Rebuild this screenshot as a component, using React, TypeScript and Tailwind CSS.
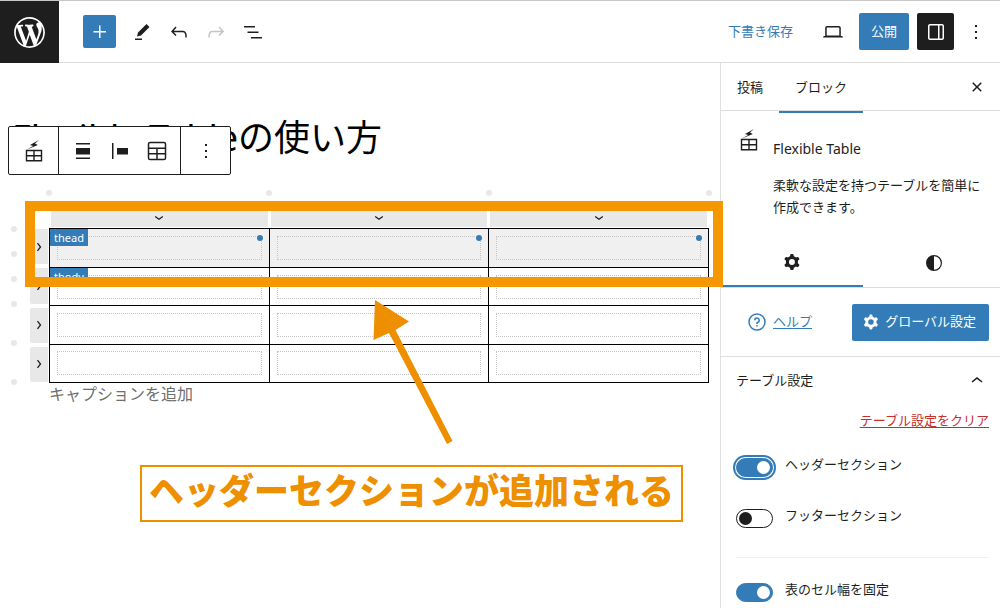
import React from "react";
import clsx from "clsx";

const icons = {
  wordpress:
    "M20 10c0-5.51-4.49-10-10-10C4.48 0 0 4.49 0 10c0 5.52 4.48 10 10 10 5.51 0 10-4.48 10-10zM7.78 15.37L4.37 6.22c.55-.02 1.17-.08 1.17-.08.5-.06.44-1.13-.06-1.11 0 0-1.45.11-2.37.11-.18 0-.37 0-.58-.01C4.12 2.69 6.87 1.11 10 1.11c2.33 0 4.45.87 6.05 2.34-.68-.11-1.65.39-1.65 1.58 0 .74.45 1.36.9 2.1.35.61.55 1.36.55 2.46 0 1.49-1.4 5-1.4 5l-3.03-8.37c.54-.02.82-.17.82-.17.5-.05.44-1.25-.06-1.22 0 0-1.44.12-2.38.12-.87 0-2.33-.12-2.33-.12-.5-.03-.56 1.2-.06 1.22l.92.08 1.26 3.41zM17.41 10c.24-.64.74-1.87.43-4.25.7 1.29 1.05 2.71 1.05 4.25 0 3.29-1.73 6.24-4.4 7.78.97-2.59 1.94-5.2 2.92-7.78zM6.1 18.09C3.12 16.65 1.11 13.53 1.11 10c0-1.3.23-2.48.72-3.59C3.25 10.3 4.67 14.2 6.1 18.09zm4.03-6.63l2.58 6.98c-.86.29-1.76.45-2.71.45-.79 0-1.57-.11-2.29-.33.81-2.38 1.62-4.74 2.42-7.1z",
  plus: "M11 12.5V18H12.5V12.5H18V11H12.5V5.5H11V11H5.5V12.5H11Z",
  pencil: "m19.5 7-3-3-8.5 8.5-1 4 4-1L19.5 7ZM12 18.5H5V20h7v-1.5Z",
  undo: "M18.3 11.7c-.6-.6-1.4-.9-2.3-.9H6.7l2.9-3.3-1.1-1-4.5 5L8.5 16l1-1-2.7-2.7H16c.5 0 .9.2 1.3.5 1 1 1 3.4 1 4.5v.3h1.5v-.2c0-1.5 0-4.3-1.5-5.7z",
  redo: "M15.6 6.5l-1.1 1 2.9 3.3H8c-.9 0-1.7.3-2.3.9-1.4 1.5-1.4 4.2-1.4 5.6v.2h1.5v-.3c0-1.1 0-3.5 1-4.5.3-.3.7-.5 1.3-.5h9.2L14.5 15l1.1 1.1 4.6-4.6-4.6-5z",
  list: "M3 6h11v1.5H3V6Zm3.5 5.5h11V13h-11v-1.5ZM21 17H10v1.5h11V17Z",
  desktop:
    "M20.5 16h-.7V8c0-1.1-.9-2-2-2H6.2c-1.1 0-2 .9-2 2v8h-.7c-.8 0-1.5.7-1.5 1.5h20c0-.8-.7-1.5-1.5-1.5zM5.7 8c0-.3.2-.5.5-.5h11.6c.3 0 .5.2.5.5v7.6H5.7V8z",
  drawer:
    "M18 4H6c-1.1 0-2 .9-2 2v12c0 1.1.9 2 2 2h12c1.1 0 2-.9 2-2V6c0-1.1-.9-2-2-2zm-4 14.5H6c-.3 0-.5-.2-.5-.5V6c0-.3.2-.5.5-.5h8v13zm4.5-.5c0 .3-.2.5-.5.5h-2.5v-13H18c.3 0 .5.2.5.5v12z",
  more: "M13 19h-2v-2h2v2zm0-6h-2v-2h2v2zm0-6h-2V5h2v2z",
  close:
    "M12 13.06l3.712 3.713 1.061-1.06L13.061 12l3.712-3.712-1.06-1.06L12 10.938 8.288 7.227l-1.061 1.06L10.939 12l-3.712 3.712 1.06 1.061L12 13.061z",
  cog: "M10.289 4.836A1 1 0 0111.275 4h1.306a1 1 0 01.987.836l.244 1.466c.787.26 1.503.679 2.108 1.218l1.393-.522a1 1 0 011.216.437l.653 1.13a1 1 0 01-.23 1.273l-1.148.944a6.025 6.025 0 010 2.435l1.149.946a1 1 0 01.23 1.272l-.653 1.13a1 1 0 01-1.216.437l-1.394-.522c-.605.54-1.32.958-2.108 1.218l-.244 1.466a1 1 0 01-.987.836h-1.306a1 1 0 01-.986-.836l-.244-1.466a5.995 5.995 0 01-2.108-1.218l-1.394.522a1 1 0 01-1.217-.436l-.653-1.131a1 1 0 01.23-1.272l1.149-.946a6.026 6.026 0 010-2.435l-1.148-.944a1 1 0 01-.23-1.272l.653-1.131a1 1 0 011.217-.437l1.393.522a5.994 5.994 0 012.108-1.218l.244-1.466zM14.929 12a3 3 0 11-6 0 3 3 0 016 0z",
  contrast:
    "M12 4a8 8 0 1 0 0 16 8 8 0 0 0 0-16zm0 1.2a6.8 6.8 0 0 1 0 13.6z",
  help: "M12 4.75a7.25 7.25 0 100 14.5 7.25 7.25 0 000-14.5zM3.25 12a8.75 8.75 0 1117.5 0 8.75 8.75 0 01-17.5 0zM12 8.75a1.5 1.5 0 01.167 2.99c-.465.052-.917.44-.917 1.01V14h1.5v-.845A3 3 0 109 10.25h1.5a1.5 1.5 0 011.5-1.5zM11.25 15v1.5h1.5V15h-1.5z",
  chevronUp: "M6.5 12.4L12 8l5.5 4.4-.9 1.2L12 10l-4.5 3.6-1-1.2z",
  align: "M5 4h14v1.5H5zM5 9h14v6.5H5zM5 18.5h14V20H5z",
  justify: "M9 9v6.5h11V9H9zM4 20h1.5V4H4v16z",
};

const Icon = ({
  name,
  size = 24,
  viewBox = "0 0 24 24",
}: {
  name: keyof typeof icons;
  size?: number;
  viewBox?: string;
}) => (
  <svg
    width={size}
    height={size}
    viewBox={viewBox}
    fill="currentColor"
    fillRule="evenodd"
    className="shrink-0"
    aria-hidden="true"
  >
    <path d={icons[name]} />
  </svg>
);

const FlexTableIcon = () => (
  <svg width="24" height="24" viewBox="0 0 24 24" aria-hidden="true">
    <path
      d="M4.5 11.5h15v10.3h-15zM12 11.5v10.3M4.5 16.7h15"
      fill="none"
      stroke="currentColor"
      strokeWidth="1.4"
    />
    <path
      d="M17 1 8 6.1l3.2 1L4.5 10.8 15.8 6 13 4.6z"
      fill="currentColor"
    />
  </svg>
);

const TableIcon = () => (
  <svg
    width="24"
    height="24"
    viewBox="0 0 24 24"
    fill="none"
    stroke="currentColor"
    strokeWidth="1.5"
    aria-hidden="true"
  >
    <rect x="3.5" y="3.5" width="17" height="17" rx="1.6" />
    <path d="M3.5 9.2h17M3.5 14.7h17M12 9.2v11.3" />
  </svg>
);

const Chevron = ({ down }: { down?: boolean }) => (
  <svg
    width="10"
    height="10"
    viewBox="0 0 10 10"
    fill="none"
    stroke="#1e1e1e"
    strokeWidth="1.3"
    aria-hidden="true"
  >
    <path d={down ? "M1.2 3.5 5 6.2l3.8-2.7" : "M3.5 1.2 6.5 5 3.5 8.8"} />
  </svg>
);

const IconButton = ({
  label,
  className,
  children,
}: {
  label: string;
  className?: string;
  children: React.ReactNode;
}) => (
  <button
    aria-label={label}
    className={clsx("flex items-center justify-center", className)}
  >
    {children}
  </button>
);

const Header = () => (
  <header className="flex">
    <a
      href="#"
      aria-label="WordPress"
      className="flex h-[62px] w-[59px] items-center justify-center bg-[#1e1e1e] text-white"
    >
      <Icon name="wordpress" size={37} viewBox="-2 -2 24 24" />
    </a>
    <div className="flex flex-1 items-center justify-between border-b border-[#dcdcdc] pr-2.5 pl-6">
      <div className="flex items-center">
        <IconButton
          label="ブロック挿入"
          className="mr-[7px] h-[33px] w-[33px] rounded-xs bg-[#347cb8] text-white"
        >
          <Icon name="plus" />
        </IconButton>
        <IconButton label="ツール" className="h-9 w-[37px]">
          <Icon name="pencil" />
        </IconButton>
        <IconButton label="元に戻す" className="h-9 w-[37px]">
          <Icon name="undo" />
        </IconButton>
        <IconButton label="やり直す" className="h-9 w-[37px] text-[#c4c4c4]">
          <Icon name="redo" />
        </IconButton>
        <IconButton label="リスト表示" className="h-9 w-[37px]">
          <Icon name="list" />
        </IconButton>
      </div>
      <div className="flex items-center gap-2">
        <button className="mr-3.5 text-[#347cb8]">下書き保存</button>
        <IconButton label="プレビュー" className="h-9 w-9">
          <Icon name="desktop" />
        </IconButton>
        <button className="h-[37px] rounded-xs bg-[#347cb8] px-3 text-white">
          公開
        </button>
        <IconButton
          label="設定"
          className="h-[37px] w-[37px] rounded-xs bg-[#1e1e1e] text-white"
        >
          <Icon name="drawer" />
        </IconButton>
        <IconButton label="オプション" className="h-9 w-7">
          <Icon name="more" />
        </IconButton>
      </div>
    </div>
  </header>
);

const BlockToolbar = () => (
  <div className="absolute top-[63px] left-2 flex h-[49px] rounded-xs border border-[#1e1e1e] bg-white">
    <IconButton label="Flexible Table" className="w-[49px]">
      <FlexTableIcon />
    </IconButton>
    <div className="flex border-x border-[#1e1e1e] px-[5px]">
      <IconButton label="配置" className="w-[37px]">
        <Icon name="align" />
      </IconButton>
      <IconButton label="項目の揃え位置" className="w-[37px]">
        <Icon name="justify" />
      </IconButton>
      <IconButton label="表を編集" className="w-[37px]">
        <TableIcon />
      </IconButton>
    </div>
    <IconButton label="オプション" className="w-[49px]">
      <Icon name="more" />
    </IconButton>
  </div>
);

const Dot = () => <span className="block h-1.5 w-1.5 rounded-full bg-[#e8e8e8]" />;

const rows = ["thead", "tbody", "", ""];
const columns = [1, 2, 3];

const TableCell = ({
  row,
  column,
}: {
  row: number;
  column: number;
}) => {
  const Tag = row === 0 ? "th" : "td";
  return (
    <Tag className="relative border border-black px-[7px] py-0">
      <input
        aria-label={`${row + 1}行 ${column}列`}
        className="block h-6 w-full border border-dotted border-[#c4c4c4] bg-transparent outline-none"
      />
      {column === 1 && rows[row] && (
        <span className="absolute top-0 left-0 h-[17px] bg-[#347cb8] px-1 text-[11px] leading-[17px] font-normal text-white">
          {rows[row]}
        </span>
      )}
      {row === 0 && (
        <span className="absolute top-1.5 right-1.5 h-1.5 w-1.5 rounded-full bg-[#347cb8]" />
      )}
    </Tag>
  );
};

const FlexibleTable = () => (
  <div className="flex pr-[11px]">
    {/* insert points for rows */}
    <div className="mr-[13px] flex flex-col pt-9 pl-[11px]">
      {[25, 25, 25, 39, 39, 6].map((height, i) => (
        <div key={i} style={{ height }}>
          <Dot />
        </div>
      ))}
    </div>
    <div className="flex w-[19px] flex-col pt-[39px]">
      <div className="flex h-[155px] flex-col gap-1 pb-0.5">
        {rows.map((_, i) => (
          <button
            key={i}
            aria-label={`${i + 1}行目を選択`}
            className="flex w-[18px] flex-1 items-center justify-center rounded-l-xs bg-[#e8e8e8]"
          >
            <Chevron />
          </button>
        ))}
      </div>
    </div>
    <div className="min-w-0 flex-1">
      {/* insert points for columns */}
      <div className="-mx-[3px] flex justify-between">
        <Dot />
        <Dot />
        <Dot />
        <Dot />
      </div>
      <div className="mt-[13px] flex gap-[3px] px-0.5 pb-px">
        {columns.map((column) => (
          <button
            key={column}
            aria-label={`${column}列目を選択`}
            className="flex h-[18px] flex-1 items-center justify-center bg-[#e8e8e8]"
          >
            <Chevron down />
          </button>
        ))}
      </div>
      <table className="h-[155px] w-full table-fixed border-collapse">
        <thead className="bg-[#f0f0f1]">
          <tr className="h-[39px]">
            {columns.map((column) => (
              <TableCell key={column} row={0} column={column} />
            ))}
          </tr>
        </thead>
        <tbody>
          {[1, 2, 3].map((row) => (
            <tr key={row}>
              {columns.map((column) => (
                <TableCell key={column} row={row} column={column} />
              ))}
            </tr>
          ))}
        </tbody>
      </table>
      <p className="text-base leading-[22px] text-[#6f6f6f]">
        キャプションを追加
      </p>
    </div>
  </div>
);

// Highlight frame, arrow and caption drawn over the editor
const Annotations = () => (
  <div className="pointer-events-none">
    <div className="absolute top-[138px] -right-[3px] left-[25px] z-10 h-[86px] border-10 border-[#f59700]" />
    <svg
      className="absolute top-[237px] left-[373px]"
      width="81"
      height="145"
      viewBox="373 300 81 145"
      aria-hidden="true"
    >
      <path
        d="M375 300 409 321.5 395.5 330 452.5 441 447 444 389 333 373.5 340z"
        fill="#ee8f00"
      />
    </svg>
    <p className="absolute top-[402px] left-[140px] flex h-[57px] items-center border-2 border-[#ee8f00] bg-white px-[7px] pb-1 text-[35px] font-black whitespace-nowrap text-[#ee8f00]">
      ヘッダーセクションが追加される
    </p>
  </div>
);

const Toggle = ({
  label,
  checked,
  focused,
}: {
  label: string;
  checked?: boolean;
  focused?: boolean;
}) => (
  <label className="flex h-[51px] items-start gap-3">
    <input
      type="checkbox"
      defaultChecked={checked}
      className={clsx(
        "mt-0.5 h-[19px] w-[37px] shrink-0 appearance-none rounded-full border border-[#1e1e1e] bg-white",
        "before:m-[2px] before:block before:h-[13px] before:w-[13px] before:rounded-full before:bg-[#1e1e1e]",
        "checked:border-[#347cb8] checked:bg-[#347cb8] checked:before:ml-5 checked:before:bg-white",
        focused && "ring-2 ring-[#347cb8] ring-offset-1",
      )}
    />
    <span className="-mt-0.5 leading-5">{label}</span>
  </label>
);

const Sidebar = () => (
  <aside className="w-[280px] shrink-0 border-l border-[#e0e0e0]">
    <div className="flex h-12 items-stretch border-b border-[#dcdcdc] pr-[11px]">
      <button className="px-4 pt-0.5">投稿</button>
      <button className="relative px-4 pt-0.5">
        ブロック
        <span className="absolute inset-x-0 -bottom-[3px] h-0.5 bg-[#347cb8]" />
      </button>
      <IconButton label="閉じる" className="ml-auto w-6">
        <Icon name="close" />
      </IconButton>
    </div>
    <div className="flex items-start gap-3 px-4 pt-[17px]">
      <FlexTableIcon />
      <div className="flex-1">
        <h2 className="mt-[11px] text-sm leading-5">Flexible Table</h2>
        <p className="-mr-2 mt-[15px] leading-[22px]">
          柔軟な設定を持つテーブルを簡単に
          <br />
          作成できます。
        </p>
      </div>
    </div>
    <div className="mt-[21px] flex h-[49px] border-b border-[#dcdcdc]">
      <IconButton
        label="設定"
        className="w-[142px] border-b-2 border-[#347cb8]"
      >
        <Icon name="cog" />
      </IconButton>
      <IconButton label="スタイル" className="flex-1 pl-1">
        <Icon name="contrast" />
      </IconButton>
    </div>
    <div className="flex h-[69px] items-center justify-between border-b border-[#e0e0e0] pr-[11px] pl-6">
      <a href="#" className="flex items-center gap-1 text-[#347cb8]">
        <Icon name="help" />
        <span className="underline underline-offset-2">ヘルプ</span>
      </a>
      <button className="flex h-[37px] items-center gap-0.5 rounded-xs bg-[#347cb8] pr-[13px] pl-[7px] text-white">
        <Icon name="cog" size={24} viewBox="-1 0 26 24" />
        グローバル設定
      </button>
    </div>
    <div className="pr-[11px] pl-[15px]">
      <button className="flex h-12 w-full items-center justify-between">
        テーブル設定
        <Icon name="chevronUp" />
      </button>
      <div className="flex justify-end pt-[5px] pb-[26px]">
        <button className="leading-5 text-[#c5302b] underline underline-offset-2">
          テーブル設定をクリア
        </button>
      </div>
      <Toggle label="ヘッダーセクション" checked focused />
      <Toggle label="フッターセクション" />
      <hr className="-mt-px mb-[23px] border-[#f0f0f0]" />
      <div className="-mb-8">
        <Toggle label="表のセル幅を固定" checked />
      </div>
    </div>
  </aside>
);

export default function App() {
  return (
    <div className="flex min-h-screen flex-col border-t border-[#c8c8c8] bg-white font-['Noto_Sans','Noto_Sans_CJK_JP',sans-serif] text-[13px] text-[#1e1e1e]">
      <Header />
      <div className="flex flex-1">
        <main className="relative min-w-0 flex-1">
          <h1 className="px-3 pt-[51px] pb-[28px] text-[36px] leading-12 text-black">
            Flexible Tableの使い方
          </h1>
          <BlockToolbar />
          <FlexibleTable />
          <Annotations />
        </main>
        <Sidebar />
      </div>
    </div>
  );
}
